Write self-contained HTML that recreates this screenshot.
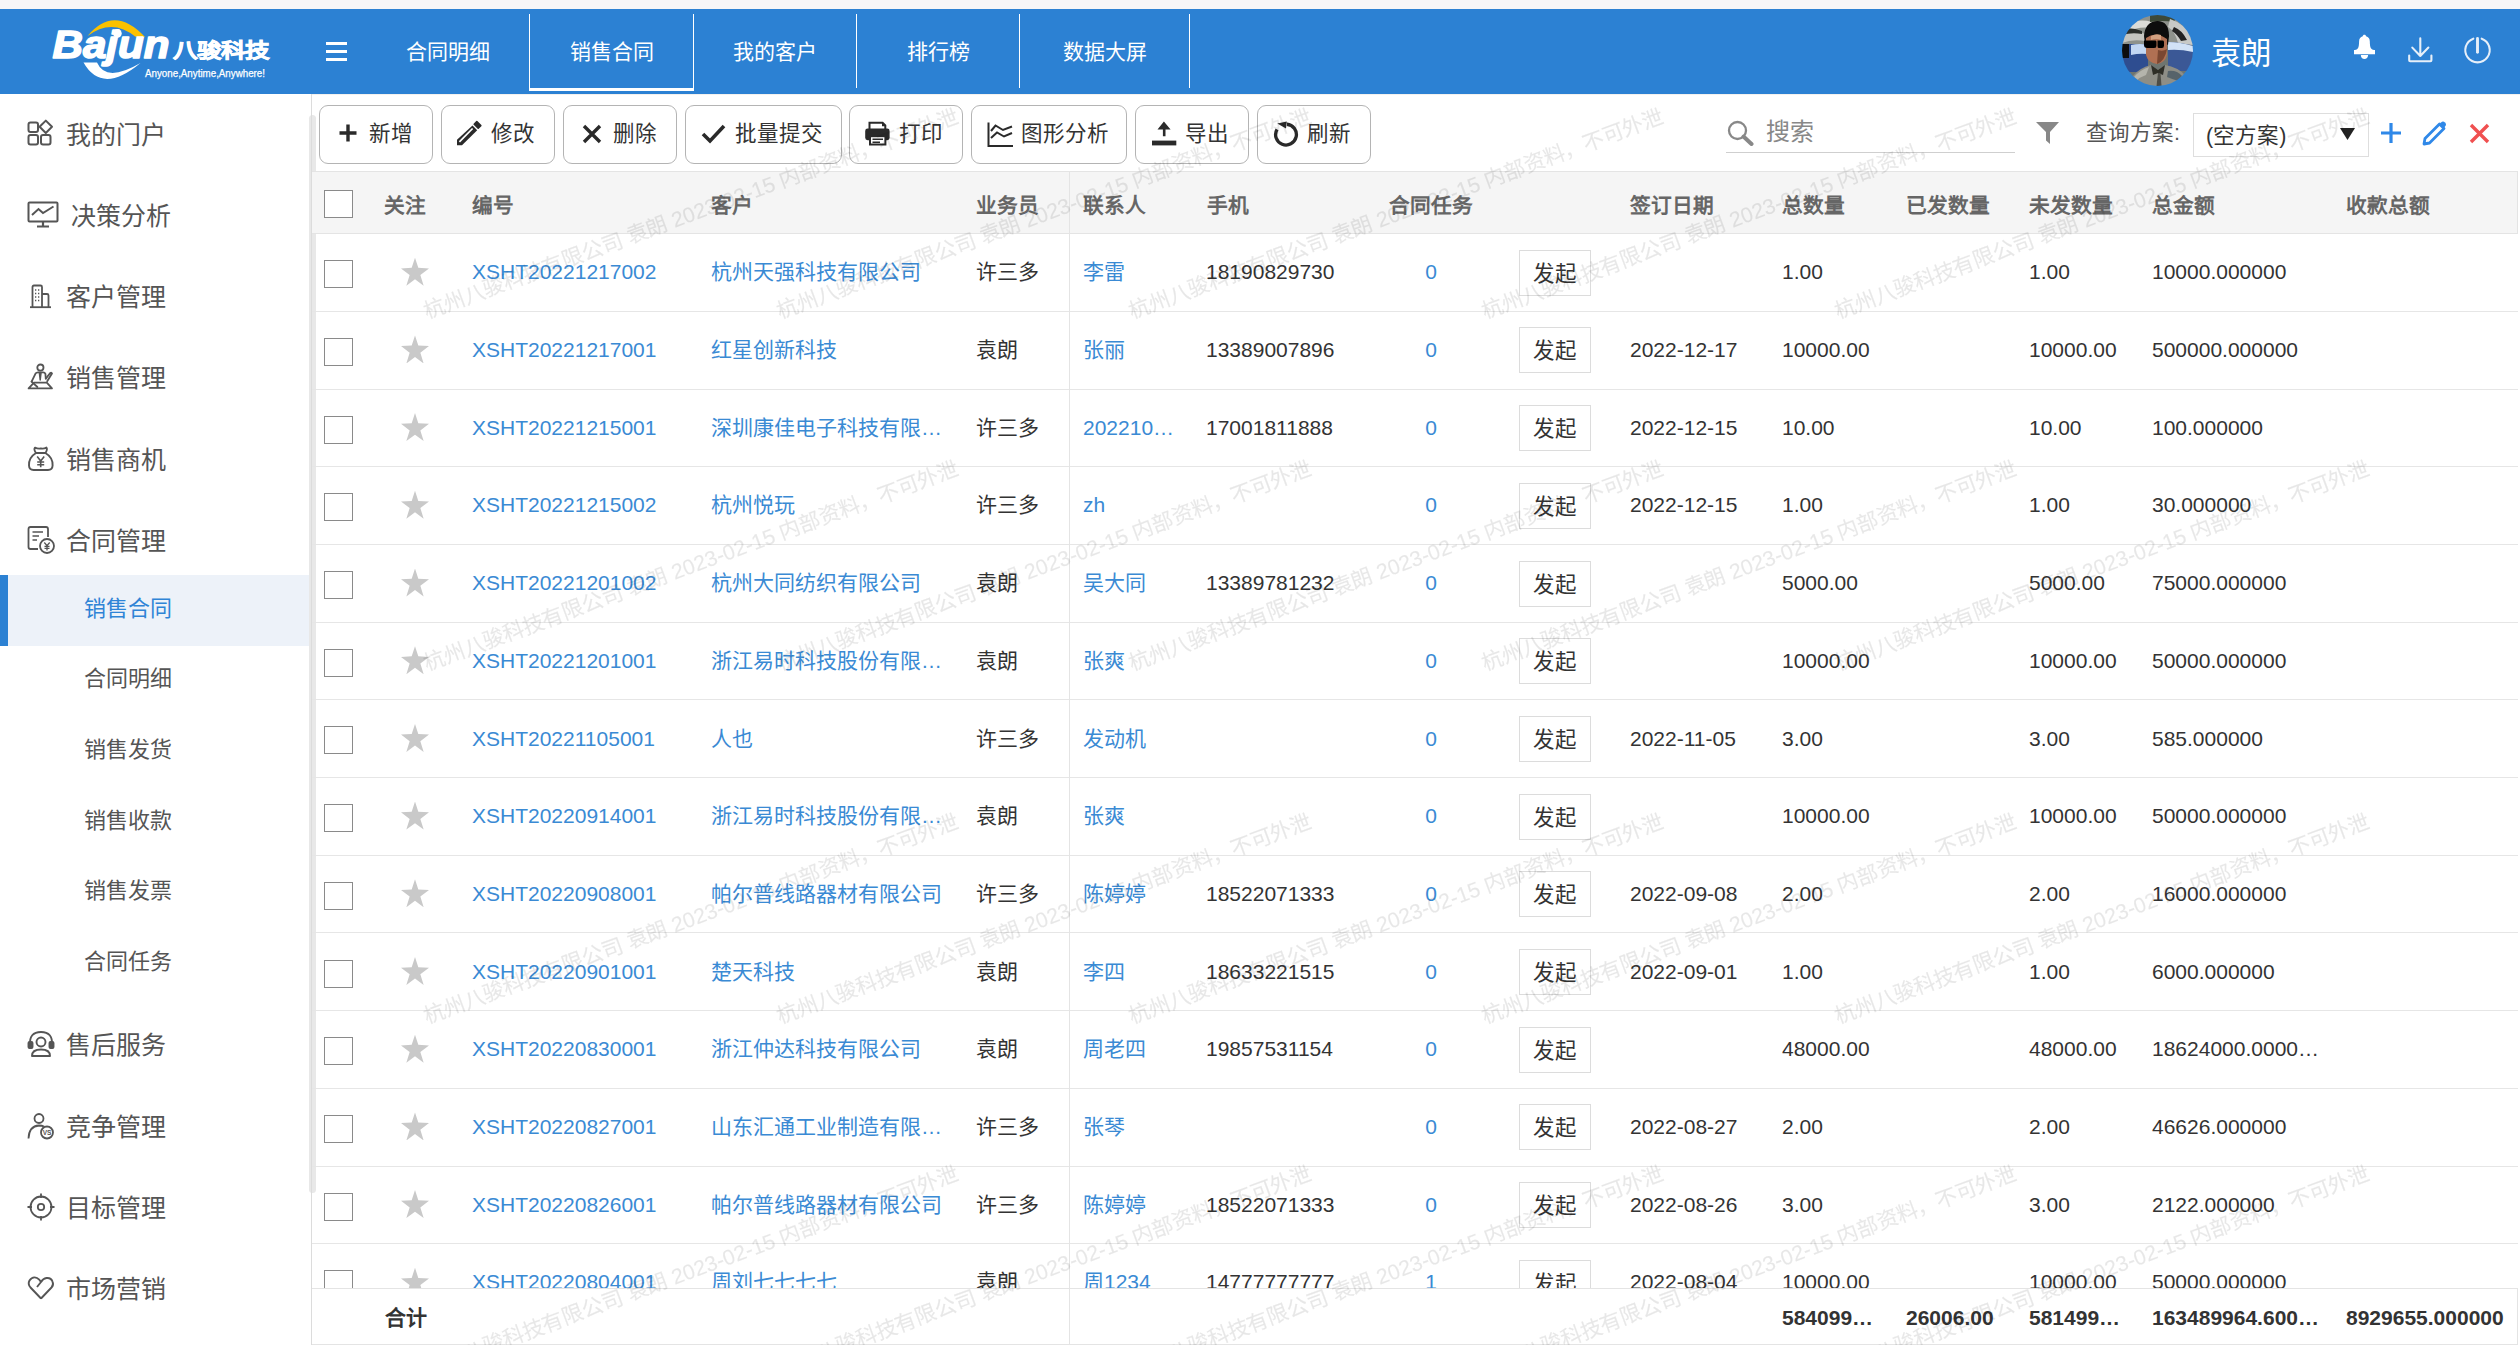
<!DOCTYPE html>
<html lang="zh-CN"><head><meta charset="utf-8"><title>销售合同</title>
<style>
*{margin:0;padding:0;box-sizing:border-box}
html,body{width:2520px;height:1345px;overflow:hidden;background:#fff;font-family:"Liberation Sans",sans-serif;color:#333}
#topstrip{position:absolute;left:0;top:0;width:2520px;height:9px;background:#f6f6f8}
#hdr{position:absolute;left:0;top:9px;width:2520px;height:85px;background:#2c81d3;box-shadow:0 1px 0 rgba(120,100,80,0.09)}
#logo{position:absolute;left:40px;top:10px;width:240px;height:80px}
#burger{position:absolute;left:326px;top:42px;width:21px;height:19px}
#burger i{position:absolute;left:0;width:21px;height:2.6px;background:#fff}
.tab{position:absolute;top:14px;height:74px;color:#fff;font-size:21px;line-height:76px;text-align:center}
.tab.sep{border-right:1.5px solid #fff}
.tab.act{top:14px;height:77px;border-left:1.5px solid #fff;border-right:1.5px solid #fff;border-bottom:3px solid #fff;line-height:76px}
#avatar{position:absolute;left:2122px;top:15px;width:71px;height:71px;border-radius:50%;overflow:hidden}
#uname{position:absolute;left:2211px;top:32.5px;font-size:30.5px;line-height:40px;color:#fff}
.hico{position:absolute}

/* sidebar */
#side{position:absolute;left:0;top:94px;width:312px;height:1251px;background:#fff}
.mi{position:absolute;left:66px;margin-top:1px;font-size:25px;line-height:30px;color:#555;white-space:nowrap}
.si{position:absolute;left:84px;margin-top:1.8px;font-size:22px;line-height:30px;color:#555;white-space:nowrap}
.mico{position:absolute;left:26px;width:30px;height:30px}
#selbg{position:absolute;left:0;top:575px;width:311px;height:71px;background:#edf2f9}
#selbar{position:absolute;left:0;top:575px;width:8px;height:71px;background:#2c81d3}
#sidel{position:absolute;left:311px;top:94px;width:1px;height:1251px;background:#dcdcdc}
#thumb{position:absolute;left:309px;top:115px;width:7px;height:1078px;background:#e8e8e8;border-radius:4px}

/* toolbar */
.btn{position:absolute;top:105px;height:59px;border:1.4px solid #b4b4b4;border-radius:9px;background:#fff;font-size:21.5px;line-height:56px;color:#333;white-space:nowrap}
.btn svg{position:absolute}
.btn span{position:absolute;top:0}
#search{position:absolute;left:1726px;top:112px;width:289px;height:41px;border-bottom:1.5px solid #cfcfcf}
#search span{position:absolute;left:40px;top:0;font-size:24px;line-height:40px;color:#888}
#qlabel{position:absolute;left:2086px;top:113px;font-size:21.5px;line-height:40px;color:#555}
#qsel{position:absolute;left:2193px;top:113px;width:176px;height:44px;border:1px solid #dedede;background:#fff}
#qsel span{position:absolute;left:12px;top:2px;font-size:21.5px;line-height:40px;color:#333}

/* table */
#thead{position:absolute;left:312px;top:171px;width:2206px;height:63px;background:#f5f5f5;border-top:1.5px solid #e4e4e4;border-bottom:1.5px solid #e4e4e4;border-right:1.5px solid #e4e4e4}
.th{position:absolute;top:4px;font-size:20.7px;line-height:60px;font-weight:bold;color:#666;white-space:nowrap}
#tbody{position:absolute;left:312px;top:0;width:2206px;height:1345px}
.row{position:absolute;left:0;width:2206px;height:77.7px;border-bottom:1.5px solid #e6e6e6}
.c{position:absolute;top:-0.9px;margin-left:-312px;font-size:21px;line-height:77px;color:#333;white-space:nowrap}
.lk{color:#3a8ad4}
.ctr{text-align:center}
.cb{position:absolute;left:12px;top:26px;width:29px;height:28px;border:1.6px solid #8a8a8a;background:#fff}
.star{position:absolute;left:89px;top:23.5px;width:28px;height:28px;background:#c9c9c9;clip-path:polygon(50% 0%,61.8% 36.2%,100% 38.2%,69.1% 61.8%,80.9% 100%,50% 77%,19.1% 100%,30.9% 61.8%,0% 38.2%,38.2% 36.2%)}
.fq{position:absolute;left:1207px;top:15.5px;width:72px;height:46px;border:1px solid #dcdcdc;background:#fff;font-weight:normal;font-size:21.5px;line-height:46px;text-align:center;color:#333}
#vdiv{position:absolute;left:1069px;top:171px;width:1px;height:1174px;background:#e4e4e4}
#tfoot{position:absolute;left:312px;top:1288px;width:2206px;height:57px;background:#fff;border-top:1.5px solid #e4e4e4;border-bottom:1.5px solid #e4e4e4;border-right:1.5px solid #e4e4e4}
.tf{position:absolute;top:1.5px;font-size:21px;line-height:54px;font-weight:bold;color:#333;white-space:nowrap}
#wm{position:absolute;left:312px;top:94px;width:2208px;height:1251px;overflow:hidden;pointer-events:none;opacity:0.09}
.wmt{position:absolute;font-size:21.3px;color:#000;-webkit-text-stroke:0.2px #000;white-space:nowrap;transform-origin:0 100%;transform:rotate(-20.3deg);line-height:24px}

</style></head><body>
<div id="topstrip"></div>
<div id="hdr"></div>
<svg id="logo" viewBox="0 0 240 80" width="240" height="80">
  <path d="M47.5 26 Q74 -6 105 27 L95.5 26.8 Q72 7.5 47.5 26 Z" fill="#fac100"/>
  <path d="M43.5 52.5 Q62 85 100.5 53 Q66 73 57 52.5 Z" fill="#fff"/>
  <text x="12.5" y="48.3" font-family="Liberation Sans" font-weight="bold" font-style="italic" font-size="39" fill="#fff" stroke="#fff" stroke-width="1.6" stroke-linejoin="round" textLength="117" lengthAdjust="spacingAndGlyphs">Bajun</text>
  <circle cx="77.4" cy="23.4" r="4.3" fill="#fff"/>
  <text x="132.5" y="47.6" font-weight="bold" font-size="20.5" fill="#fff" stroke="#fff" stroke-width="0.7" textLength="96" lengthAdjust="spacingAndGlyphs">八骏科技</text>
  <text x="105" y="67" font-family="Liberation Sans" font-size="11" fill="#fff" stroke="#fff" stroke-width="0.25" textLength="120" lengthAdjust="spacingAndGlyphs">Anyone,Anytime,Anywhere!</text>
</svg>
<div id="burger"><i style="top:0"></i><i style="top:8.2px"></i><i style="top:16.4px"></i></div>
<div class="tab" style="left:366px;width:163px">合同明细</div>
<div class="tab act" style="left:529px;width:165px">销售合同</div>
<div class="tab sep" style="left:694px;width:163px">我的客户</div>
<div class="tab sep" style="left:857px;width:163px">排行榜</div>
<div class="tab sep" style="left:1020px;width:170px">数据大屏</div>
<div id="avatar">
  <svg viewBox="0 0 71 71" width="71" height="71">
    <defs><filter id="avb" x="-5%" y="-5%" width="110%" height="110%"><feGaussianBlur stdDeviation="0.55"/></filter></defs>
    <g filter="url(#avb)">
    <rect width="71" height="71" fill="#6e7470"/>
    <path d="M0 0 H71 V30 H0 Z" fill="#8e928c"/>
    <path d="M4 10 Q16 3 30 7 L29 13 Q16 11 4 18 Z" fill="#dcdcd8"/>
    <path d="M0 20 Q12 15 24 19 L23 26 Q10 24 0 28 Z" fill="#c4c5c0"/>
    <path d="M0 14 Q10 12 20 16 L20 19 Q10 17 0 20 Z" fill="#2a2e2a"/>
    <path d="M28 0 Q40 -2 54 2 L52 7 Q40 5 28 7 Z" fill="#3e4a38"/>
    <path d="M48 4 Q64 9 71 24 V30 L56 28 Q53 16 46 12 Z" fill="#c8c9c6"/>
    <path d="M52 12 Q60 15 65 25 L59 26 Q55 19 50 16 Z" fill="#222"/>
    <path d="M0 29 H26 V57 H0 Z" fill="#2f4e90"/>
    <path d="M9 30 Q18 28 26 30 V39 Q17 38 9 40 Z" fill="#c2d7f3"/>
    <path d="M0 29 H7 V43 H0 Z" fill="#0a0a0a"/>
    <path d="M46 27 Q58 27 71 31 V56 H46 Z" fill="#3a5896"/>
    <path d="M46 27 Q58 27 71 31 V37 Q58 34 46 35 Z" fill="#d2e2f6"/>
    <path d="M22 21 Q23 7 35 6 Q47 6 47 21 L46 30 Q35 23 23 29 Z" fill="#0a0a0a"/>
    <path d="M24 23 Q34 16 45 24 L45 40 Q43 48 35 49 Q26 48 24 40 Z" fill="#b07052"/>
    <path d="M29 21 Q34 18 39 20 L39 25 Q34 23 29 25 Z" fill="#d2a080"/>
    <path d="M36 35 Q41 37 45 34 Q43 46 35 49 Z" fill="#7a4630"/>
    <path d="M22 25.5 H33.5 Q34.5 25.5 34.5 27 V30.5 Q34.5 33 32.5 33 H25 Q22 33 22 30 Z" fill="#050505"/>
    <path d="M35.5 25.5 H41 Q42 25.5 42 27 V30.5 Q42 33 40 33 H36.5 Q35.5 33 35.5 31 Z" fill="#050505"/>
    <path d="M8 71 L11 61 Q17 53 29 50 L36 55 L43 50 Q56 52 64 61 L67 71 Z" fill="#8e8e86"/>
    <path d="M12 62 Q18 55 27 52 L24 60 Q18 62 14 66 Z" fill="#b4b4ac"/>
    <path d="M29 50 L36 55 L43 50 L41 60 L36 58 L31 60 Z" fill="#2e2e28"/>
    <path d="M46 56 Q55 55 60 61 L56 66 Q50 64 45 62 Z" fill="#56646a"/>
    <path d="M36 58 L34.5 71 H39.5 L38.5 58 Z" fill="#4e4e46"/>
    </g>
  </svg>
</div>
<div id="uname">袁朗</div>
<svg class="hico" style="left:2353px;top:34px" width="23" height="26" viewBox="0 0 23 26">
  <path d="M11.4 0.8 C10.3 0.8 9.9 1.5 9.7 2.3 C7.5 2.9 6.2 4.6 6.1 7.2 C6 11 5.9 13.4 4.3 15 C3.5 15.8 2.4 16.1 1 16.1 V20.2 H22 V16.1 C20.6 16.1 19.4 15.8 18.6 15 C17 13.4 16.9 11 16.8 7.2 C16.7 4.6 15.4 2.9 13.1 2.3 C12.9 1.5 12.5 0.8 11.4 0.8 Z" fill="#fff"/>
  <path d="M7.8 20.9 H15.1 C15 23.3 13.5 24.9 11.45 24.9 C9.4 24.9 7.9 23.3 7.8 20.9 Z" fill="#fff"/>
</svg>
<svg class="hico" style="left:2406px;top:36px" width="28" height="28" viewBox="0 0 28 28" fill="none" stroke="#e6eff9" stroke-width="2.1" stroke-linecap="round" stroke-linejoin="round">
  <path d="M14.3 2.4 V20 M6.3 11.6 L14.3 20 L22.4 11.6"/>
  <path d="M3.2 19.6 V24.3 Q3.2 25.3 4.2 25.3 H24.4 Q25.4 25.3 25.4 24.3 V19.6"/>
</svg>
<svg class="hico" style="left:2462px;top:35px" width="32" height="32" viewBox="0 0 32 32" fill="none" stroke="#e6eff9" stroke-width="2.1" stroke-linecap="round">
  <path d="M11.3 3.7 A12.2 12.2 0 1 0 19.7 3.7"/>
  <path d="M15.5 3.4 V17.3" stroke-width="2.9"/>
</svg>

<!-- sidebar -->
<div id="side">
</div>
<div id="selbg"></div><div id="selbar"></div>
<div id="thumb"></div>
<div id="sidel"></div>

<!-- main items -->
<svg class="mico" style="top:119px" viewBox="0 0 30 30" fill="none" stroke="#555" stroke-width="2">
  <rect x="2.5" y="3.5" width="9.5" height="9.5" rx="2"/>
  <rect x="2.5" y="16" width="9.5" height="9.5" rx="2"/>
  <rect x="15" y="16" width="9.5" height="9.5" rx="2"/>
  <path d="M19.8 1.6 L26 7.8 L19.8 14 L13.6 7.8 Z" stroke-linejoin="round"/>
</svg>
<div class="mi" style="top:119px">我的门户</div>
<svg class="mico" style="top:200px;width:34px" viewBox="0 0 34 30" fill="none" stroke="#555" stroke-width="2">
  <rect x="2.5" y="2.5" width="29" height="19" rx="1"/>
  <path d="M6 15 L12.5 9 L17 13 L27.5 6.5"/>
  <path d="M17 21.5 V26 M11 26.5 H23" stroke-width="2.2"/>
</svg>
<div class="mi" style="top:200px;left:71px">决策分析</div>
<svg class="mico" style="top:281px" viewBox="0 0 30 30" fill="none" stroke="#555" stroke-width="1.8">
  <path d="M6.5 26 V6 Q6.5 4.5 8 4.5 H14.5 Q16 4.5 16 6 V26"/>
  <path d="M16 13 H21 Q22.5 13 22.5 14.5 V26"/>
  <path d="M4 26.2 H25"/>
  <path d="M9 9 H10.3 M12 9 H13.3 M9 12.5 H10.3 M12 12.5 H13.3 M9 16 H10.3 M12 16 H13.3 M9 19.5 H10.3 M12 19.5 H13.3" stroke-width="1.5"/>
</svg>
<div class="mi" style="top:281px">客户管理</div>
<svg class="mico" style="top:362px" viewBox="0 0 30 30" fill="none" stroke="#555" stroke-width="1.8" stroke-linejoin="round" stroke-linecap="round">
  <circle cx="14.4" cy="5.6" r="3.1"/>
  <path d="M5.6 19.6 L9.5 11.6 Q10.3 10.4 12 10.4 H17.2 Q18.8 10.4 19.4 11.8 L19.8 16.6"/>
  <path d="M13.4 10.9 L14.2 18 L15 10.9" stroke-width="1.5"/>
  <path d="M19.8 16.6 L24.2 11 Q25.6 10.2 26 11.6 L21.2 19.2"/>
  <path d="M5.6 19.6 L11.4 25"/>
  <path d="M8 20.6 H20.8 L26 26.4 H2.6 Z"/>
</svg>
<div class="mi" style="top:362px">销售管理</div>
<svg class="mico" style="top:444px" viewBox="0 0 30 30" fill="none" stroke="#555" stroke-width="1.9" stroke-linejoin="round">
  <path d="M10 9 Q7.5 5.5 9 3.6 Q12 5 14.8 4.4 Q17.6 5 20.4 3.6 Q21.8 5.5 19.4 9"/>
  <path d="M10 9 H19.4 Q27 13.5 26.6 21.5 Q26.4 26 22 26 H7.6 Q3.2 26 3 21.5 Q2.6 13.5 10 9 Z"/>
  <path d="M11.2 12.6 L14.7 17 L18.2 12.6 M14.7 17 V23.2 M11.2 18 H18.2 M11.2 20.8 H18.2" stroke-width="1.6"/>
</svg>
<div class="mi" style="top:444px">销售商机</div>
<svg class="mico" style="top:525px" viewBox="0 0 30 30" fill="none" stroke="#555" stroke-width="1.8" stroke-linejoin="round">
  <path d="M22 12 V4 Q22 2 20 2 H4.5 Q2.5 2 2.5 4 V22 Q2.5 24 4.5 24 H12"/>
  <path d="M6.5 7 H17 M6.5 11 H13 M6.5 15 H11" stroke-width="1.6"/>
  <circle cx="21" cy="21" r="7"/>
  <path d="M18.3 17.5 L21 20.6 L23.7 17.5 M21 20.6 V25.5 M18.5 21.3 H23.5 M18.5 23.3 H23.5" stroke-width="1.3"/>
</svg>
<div class="mi" style="top:525px">合同管理</div>
<div class="si" style="top:592px;color:#2f84d6">销售合同</div>
<div class="si" style="top:662px">合同明细</div>
<div class="si" style="top:733px">销售发货</div>
<div class="si" style="top:804px">销售收款</div>
<div class="si" style="top:874px">销售发票</div>
<div class="si" style="top:945px">合同任务</div>
<svg class="mico" style="top:1029px" viewBox="0 0 30 30" fill="none" stroke="#555" stroke-width="1.9" stroke-linejoin="round">
  <path d="M4 16 Q3 3 15 3 Q27 3 26 16"/>
  <rect x="2.5" y="13" width="4" height="6" rx="1" fill="#555"/>
  <rect x="23.5" y="13" width="4" height="6" rx="1" fill="#555"/>
  <circle cx="15" cy="13" r="4.5"/>
  <path d="M6 27 Q6 20.5 15 20.5 Q24 20.5 24 27 Z"/>
</svg>
<div class="mi" style="top:1029px">售后服务</div>
<svg class="mico" style="top:1111px" viewBox="0 0 30 30" fill="none" stroke="#555" stroke-width="1.8" stroke-linejoin="round">
  <circle cx="13" cy="7.5" r="4.5"/>
  <path d="M2.5 27.5 Q3 15 13 14.5 Q16 14.5 18 15.5"/>
  <circle cx="21" cy="21.5" r="6"/>
  <text x="21" y="24" font-size="6.5" font-weight="bold" fill="#555" stroke="none" text-anchor="middle" font-family="Liberation Sans">VS</text>
</svg>
<div class="mi" style="top:1111px">竞争管理</div>
<svg class="mico" style="top:1192px" viewBox="0 0 30 30" fill="none" stroke="#555" stroke-width="1.8">
  <circle cx="15" cy="15" r="10.5"/>
  <circle cx="15" cy="15" r="3.2"/>
  <path d="M15 1.5 V6 M15 24 V28.5 M1.5 15 H6 M24 15 H28.5"/>
</svg>
<div class="mi" style="top:1192px">目标管理</div>
<svg class="mico" style="top:1273px" viewBox="0 0 30 30" fill="none" stroke="#555" stroke-width="1.9" stroke-linejoin="round">
  <path d="M15 25.5 L4.5 14.5 Q1.5 11 3.5 7.5 Q6.5 3 11 5 Q13.5 6.3 15 9 L11 14 M15 9 Q17 5.5 20.5 5 Q25 4.5 26.5 8.5 Q28 12 25.5 14.5 L15 25.5"/>
</svg>
<div class="mi" style="top:1273px">市场营销</div>

<!-- toolbar -->
<div class="btn" style="left:319px;width:114px">
  <svg style="left:18px;top:17px" width="20" height="20" viewBox="0 0 20 20"><path d="M10 1.5 V18.5 M1.5 10 H18.5" stroke="#2a2a2a" stroke-width="3.4"/></svg>
  <span style="left:49px">新增</span>
</div>
<div class="btn" style="left:441px;width:114px">
  <svg style="left:15px;top:14px" width="28" height="28" viewBox="0 0 28 28">
    <path d="M-0.3 25.3 V20.1 L15.5 5.6 L20.2 10.3 L5 25.3 Z" fill="#2a2a2a"/>
    <path d="M2.4 21.9 L15.6 8.5" stroke="#fff" stroke-width="1.7"/>
    <path d="M17.2 4.2 L19.8 1.6 L23.8 5.6 L21.2 8.2 Z" fill="#2a2a2a" stroke="#2a2a2a" stroke-width="1.6" stroke-linejoin="round"/>
  </svg>
  <span style="left:49px">修改</span>
</div>
<div class="btn" style="left:563px;width:114px">
  <svg style="left:17px;top:17px" width="22" height="22" viewBox="0 0 22 22"><path d="M3 3 L19 19 M19 3 L3 19" stroke="#2a2a2a" stroke-width="3.4"/></svg>
  <span style="left:49px">删除</span>
</div>
<div class="btn" style="left:685px;width:157px">
  <svg style="left:15px;top:17px" width="26" height="22" viewBox="0 0 26 22"><path d="M2 11 L9 18 L23 3" fill="none" stroke="#2a2a2a" stroke-width="3.6"/></svg>
  <span style="left:49px">批量提交</span>
</div>
<div class="btn" style="left:849px;width:114px">
  <svg style="left:15px;top:14px" width="28" height="28" viewBox="0 0 28 28">
    <path d="M4.5 9 V2.8 H17.6 L20.3 5.5 V9" fill="none" stroke="#2a2a2a" stroke-width="2"/>
    <path d="M17 2 L21.2 6.2 H17 Z" fill="#2a2a2a"/>
    <path d="M2.6 8.5 H22.2 Q24.6 8.5 24.6 10.9 V17.8 Q24.6 20.2 22.2 20.2 H2.6 Q0.2 20.2 0.2 17.8 V10.9 Q0.2 8.5 2.6 8.5 Z" fill="#2a2a2a"/>
    <rect x="5" y="16.2" width="15.4" height="8.3" fill="#fff" stroke="#2a2a2a" stroke-width="2"/>
    <path d="M7.5 19.3 H18 M7.5 22.2 H15" stroke="#2a2a2a" stroke-width="1.5"/>
  </svg>
  <span style="left:49px">打印</span>
</div>
<div class="btn" style="left:971px;width:156px">
  <svg style="left:14px;top:15px" width="28" height="28" viewBox="0 0 28 28" fill="none" stroke="#2a2a2a" stroke-width="2">
    <path d="M2.5 1.5 V25 H27"/>
    <path d="M5 10 L9.5 4.5 L17 9 L26 5.5"/>
    <path d="M5 17 L11 11.5 L18 15.5 L26 12"/>
  </svg>
  <span style="left:49px">图形分析</span>
</div>
<div class="btn" style="left:1135px;width:114px">
  <svg style="left:16px;top:14px" width="26" height="28" viewBox="0 0 26 28">
    <path d="M11.9 1.6 L18.6 9.6 H13.5 V16.3 H10.9 V9.6 H5.5 Z" fill="#2a2a2a"/>
    <rect x="-0.3" y="20.6" width="24.6" height="4.8" fill="#2a2a2a"/>
  </svg>
  <span style="left:49px">导出</span>
</div>
<div class="btn" style="left:1257px;width:114px">
  <svg style="left:15px;top:15px" width="28" height="28" viewBox="0 0 28 28">
    <path d="M4.0 8.4 A10.4 10.4 0 1 0 13.9 3.24" fill="none" stroke="#2a2a2a" stroke-width="3.3"/>
    <path d="M4.3 2.6 L13.8 0.6 L13 7.6 Z" fill="#2a2a2a"/>
  </svg>
  <span style="left:49px">刷新</span>
</div>

<div id="search">
  <svg style="position:absolute;left:1px;top:8px" width="27" height="26" viewBox="0 0 27 26"><circle cx="10.5" cy="10.5" r="8.5" fill="none" stroke="#888" stroke-width="2.3"/><path d="M16.5 16.5 L24.5 24" stroke="#888" stroke-width="4" stroke-linecap="round"/></svg>
  <span>搜索</span>
</div>
<svg style="position:absolute;left:2035px;top:121px" width="25" height="24" viewBox="0 0 25 24"><path d="M1 1 H24 L15 11 V23 L11 19.5 V11 Z" fill="#888"/></svg>
<div id="qlabel">查询方案:</div>
<div id="qsel"><span>(空方案)</span>
  <svg style="position:absolute;left:145px;top:13px" width="17" height="14" viewBox="0 0 17 14"><path d="M1 1 H16 L8.5 13 Z" fill="#222"/></svg>
</div>
<svg style="position:absolute;left:2380px;top:122px" width="22" height="22" viewBox="0 0 22 22"><path d="M11 1 V21 M1 11 H21" stroke="#2f88e8" stroke-width="3.2"/></svg>
<svg style="position:absolute;left:2421px;top:119px" width="28" height="28" viewBox="0 0 28 28"><path d="M3 25 L4 19.5 L18.5 5 L23 9.5 L8.5 24 Z" fill="none" stroke="#2f88e8" stroke-width="2.8" stroke-linejoin="round"/><path d="M20 3.5 Q22 1.5 24 3.5 Q26 5.5 24 7.5 L22.5 9 L18.5 5 Z" fill="#2f88e8"/></svg>
<svg style="position:absolute;left:2469px;top:123px" width="21" height="21" viewBox="0 0 21 21"><path d="M2 2 L19 19 M19 2 L2 19" stroke="#f05050" stroke-width="3.4"/></svg>

<!-- table -->
<div id="tbody">
<div class="row" style="top:234.20px"><i class="cb"></i><i class="star"></i><span class="c lk" style="left:472px">XSHT20221217002</span><span class="c lk" style="left:711px">杭州天强科技有限公司</span><span class="c" style="left:976px">许三多</span><span class="c lk" style="left:1083px">李雷</span><span class="c" style="left:1206px">18190829730</span><span class="c lk ctr" style="left:1376px;width:110px">0</span><b class="fq">发起</b><span class="c" style="left:1782px">1.00</span><span class="c" style="left:2029px">1.00</span><span class="c" style="left:2152px">10000.000000</span></div>
<div class="row" style="top:311.90px"><i class="cb"></i><i class="star"></i><span class="c lk" style="left:472px">XSHT20221217001</span><span class="c lk" style="left:711px">红星创新科技</span><span class="c" style="left:976px">袁朗</span><span class="c lk" style="left:1083px">张丽</span><span class="c" style="left:1206px">13389007896</span><span class="c lk ctr" style="left:1376px;width:110px">0</span><b class="fq">发起</b><span class="c" style="left:1630px">2022-12-17</span><span class="c" style="left:1782px">10000.00</span><span class="c" style="left:2029px">10000.00</span><span class="c" style="left:2152px">500000.000000</span></div>
<div class="row" style="top:389.60px"><i class="cb"></i><i class="star"></i><span class="c lk" style="left:472px">XSHT20221215001</span><span class="c lk" style="left:711px">深圳康佳电子科技有限…</span><span class="c" style="left:976px">许三多</span><span class="c lk" style="left:1083px">202210…</span><span class="c" style="left:1206px">17001811888</span><span class="c lk ctr" style="left:1376px;width:110px">0</span><b class="fq">发起</b><span class="c" style="left:1630px">2022-12-15</span><span class="c" style="left:1782px">10.00</span><span class="c" style="left:2029px">10.00</span><span class="c" style="left:2152px">100.000000</span></div>
<div class="row" style="top:467.30px"><i class="cb"></i><i class="star"></i><span class="c lk" style="left:472px">XSHT20221215002</span><span class="c lk" style="left:711px">杭州悦玩</span><span class="c" style="left:976px">许三多</span><span class="c lk" style="left:1083px">zh</span><span class="c lk ctr" style="left:1376px;width:110px">0</span><b class="fq">发起</b><span class="c" style="left:1630px">2022-12-15</span><span class="c" style="left:1782px">1.00</span><span class="c" style="left:2029px">1.00</span><span class="c" style="left:2152px">30.000000</span></div>
<div class="row" style="top:545.00px"><i class="cb"></i><i class="star"></i><span class="c lk" style="left:472px">XSHT20221201002</span><span class="c lk" style="left:711px">杭州大同纺织有限公司</span><span class="c" style="left:976px">袁朗</span><span class="c lk" style="left:1083px">吴大同</span><span class="c" style="left:1206px">13389781232</span><span class="c lk ctr" style="left:1376px;width:110px">0</span><b class="fq">发起</b><span class="c" style="left:1782px">5000.00</span><span class="c" style="left:2029px">5000.00</span><span class="c" style="left:2152px">75000.000000</span></div>
<div class="row" style="top:622.70px"><i class="cb"></i><i class="star"></i><span class="c lk" style="left:472px">XSHT20221201001</span><span class="c lk" style="left:711px">浙江易时科技股份有限…</span><span class="c" style="left:976px">袁朗</span><span class="c lk" style="left:1083px">张爽</span><span class="c lk ctr" style="left:1376px;width:110px">0</span><b class="fq">发起</b><span class="c" style="left:1782px">10000.00</span><span class="c" style="left:2029px">10000.00</span><span class="c" style="left:2152px">50000.000000</span></div>
<div class="row" style="top:700.40px"><i class="cb"></i><i class="star"></i><span class="c lk" style="left:472px">XSHT20221105001</span><span class="c lk" style="left:711px">人也</span><span class="c" style="left:976px">许三多</span><span class="c lk" style="left:1083px">发动机</span><span class="c lk ctr" style="left:1376px;width:110px">0</span><b class="fq">发起</b><span class="c" style="left:1630px">2022-11-05</span><span class="c" style="left:1782px">3.00</span><span class="c" style="left:2029px">3.00</span><span class="c" style="left:2152px">585.000000</span></div>
<div class="row" style="top:778.10px"><i class="cb"></i><i class="star"></i><span class="c lk" style="left:472px">XSHT20220914001</span><span class="c lk" style="left:711px">浙江易时科技股份有限…</span><span class="c" style="left:976px">袁朗</span><span class="c lk" style="left:1083px">张爽</span><span class="c lk ctr" style="left:1376px;width:110px">0</span><b class="fq">发起</b><span class="c" style="left:1782px">10000.00</span><span class="c" style="left:2029px">10000.00</span><span class="c" style="left:2152px">50000.000000</span></div>
<div class="row" style="top:855.80px"><i class="cb"></i><i class="star"></i><span class="c lk" style="left:472px">XSHT20220908001</span><span class="c lk" style="left:711px">帕尔普线路器材有限公司</span><span class="c" style="left:976px">许三多</span><span class="c lk" style="left:1083px">陈婷婷</span><span class="c" style="left:1206px">18522071333</span><span class="c lk ctr" style="left:1376px;width:110px">0</span><b class="fq">发起</b><span class="c" style="left:1630px">2022-09-08</span><span class="c" style="left:1782px">2.00</span><span class="c" style="left:2029px">2.00</span><span class="c" style="left:2152px">16000.000000</span></div>
<div class="row" style="top:933.50px"><i class="cb"></i><i class="star"></i><span class="c lk" style="left:472px">XSHT20220901001</span><span class="c lk" style="left:711px">楚天科技</span><span class="c" style="left:976px">袁朗</span><span class="c lk" style="left:1083px">李四</span><span class="c" style="left:1206px">18633221515</span><span class="c lk ctr" style="left:1376px;width:110px">0</span><b class="fq">发起</b><span class="c" style="left:1630px">2022-09-01</span><span class="c" style="left:1782px">1.00</span><span class="c" style="left:2029px">1.00</span><span class="c" style="left:2152px">6000.000000</span></div>
<div class="row" style="top:1011.20px"><i class="cb"></i><i class="star"></i><span class="c lk" style="left:472px">XSHT20220830001</span><span class="c lk" style="left:711px">浙江仲达科技有限公司</span><span class="c" style="left:976px">袁朗</span><span class="c lk" style="left:1083px">周老四</span><span class="c" style="left:1206px">19857531154</span><span class="c lk ctr" style="left:1376px;width:110px">0</span><b class="fq">发起</b><span class="c" style="left:1782px">48000.00</span><span class="c" style="left:2029px">48000.00</span><span class="c" style="left:2152px">18624000.0000…</span></div>
<div class="row" style="top:1088.90px"><i class="cb"></i><i class="star"></i><span class="c lk" style="left:472px">XSHT20220827001</span><span class="c lk" style="left:711px">山东汇通工业制造有限…</span><span class="c" style="left:976px">许三多</span><span class="c lk" style="left:1083px">张琴</span><span class="c lk ctr" style="left:1376px;width:110px">0</span><b class="fq">发起</b><span class="c" style="left:1630px">2022-08-27</span><span class="c" style="left:1782px">2.00</span><span class="c" style="left:2029px">2.00</span><span class="c" style="left:2152px">46626.000000</span></div>
<div class="row" style="top:1166.60px"><i class="cb"></i><i class="star"></i><span class="c lk" style="left:472px">XSHT20220826001</span><span class="c lk" style="left:711px">帕尔普线路器材有限公司</span><span class="c" style="left:976px">许三多</span><span class="c lk" style="left:1083px">陈婷婷</span><span class="c" style="left:1206px">18522071333</span><span class="c lk ctr" style="left:1376px;width:110px">0</span><b class="fq">发起</b><span class="c" style="left:1630px">2022-08-26</span><span class="c" style="left:1782px">3.00</span><span class="c" style="left:2029px">3.00</span><span class="c" style="left:2152px">2122.000000</span></div>
<div class="row" style="top:1244.30px"><i class="cb"></i><i class="star"></i><span class="c lk" style="left:472px">XSHT20220804001</span><span class="c lk" style="left:711px">周刘七七七七</span><span class="c" style="left:976px">袁朗</span><span class="c lk" style="left:1083px">周1234</span><span class="c" style="left:1206px">14777777777</span><span class="c lk ctr" style="left:1376px;width:110px">1</span><b class="fq">发起</b><span class="c" style="left:1630px">2022-08-04</span><span class="c" style="left:1782px">10000.00</span><span class="c" style="left:2029px">10000.00</span><span class="c" style="left:2152px">50000.000000</span></div>

</div>
<div id="thead">
  <i class="cb" style="top:18px"></i>
  <span class="th" style="left:72px">关注</span>
  <span class="th" style="left:160px">编号</span>
  <span class="th" style="left:399px">客户</span>
  <span class="th" style="left:664px">业务员</span>
  <span class="th" style="left:771px">联系人</span>
  <span class="th" style="left:895px">手机</span>
  <span class="th" style="left:1064px;width:110px;text-align:center">合同任务</span>
  <span class="th" style="left:1318px">签订日期</span>
  <span class="th" style="left:1470px">总数量</span>
  <span class="th" style="left:1594px">已发数量</span>
  <span class="th" style="left:1717px">未发数量</span>
  <span class="th" style="left:1840px">总金额</span>
  <span class="th" style="left:2034px">收款总额</span>
</div>
<div id="tfoot">
  <span class="tf" style="left:73px">合计</span>
  <span class="tf" style="left:1470px">584099…</span>
  <span class="tf" style="left:1594px">26006.00</span>
  <span class="tf" style="left:1717px">581499…</span>
  <span class="tf" style="left:1840px">163489964.600…</span>
  <span class="tf" style="left:2034px">8929655.000000</span>
</div>
<div id="vdiv"></div>
<div id="wm"><div class="wmt" style="left:117.0px;top:205.5px">杭州八骏科技有限公司 袁朗 2023-02-15 内部资料，不可外泄</div><div class="wmt" style="left:469.7px;top:205.5px">杭州八骏科技有限公司 袁朗 2023-02-15 内部资料，不可外泄</div><div class="wmt" style="left:822.4px;top:205.5px">杭州八骏科技有限公司 袁朗 2023-02-15 内部资料，不可外泄</div><div class="wmt" style="left:1175.1px;top:205.5px">杭州八骏科技有限公司 袁朗 2023-02-15 内部资料，不可外泄</div><div class="wmt" style="left:1527.8px;top:205.5px">杭州八骏科技有限公司 袁朗 2023-02-15 内部资料，不可外泄</div><div class="wmt" style="left:117.0px;top:558.0px">杭州八骏科技有限公司 袁朗 2023-02-15 内部资料，不可外泄</div><div class="wmt" style="left:469.7px;top:558.0px">杭州八骏科技有限公司 袁朗 2023-02-15 内部资料，不可外泄</div><div class="wmt" style="left:822.4px;top:558.0px">杭州八骏科技有限公司 袁朗 2023-02-15 内部资料，不可外泄</div><div class="wmt" style="left:1175.1px;top:558.0px">杭州八骏科技有限公司 袁朗 2023-02-15 内部资料，不可外泄</div><div class="wmt" style="left:1527.8px;top:558.0px">杭州八骏科技有限公司 袁朗 2023-02-15 内部资料，不可外泄</div><div class="wmt" style="left:117.0px;top:910.5px">杭州八骏科技有限公司 袁朗 2023-02-15 内部资料，不可外泄</div><div class="wmt" style="left:469.7px;top:910.5px">杭州八骏科技有限公司 袁朗 2023-02-15 内部资料，不可外泄</div><div class="wmt" style="left:822.4px;top:910.5px">杭州八骏科技有限公司 袁朗 2023-02-15 内部资料，不可外泄</div><div class="wmt" style="left:1175.1px;top:910.5px">杭州八骏科技有限公司 袁朗 2023-02-15 内部资料，不可外泄</div><div class="wmt" style="left:1527.8px;top:910.5px">杭州八骏科技有限公司 袁朗 2023-02-15 内部资料，不可外泄</div><div class="wmt" style="left:117.0px;top:1263.0px">杭州八骏科技有限公司 袁朗 2023-02-15 内部资料，不可外泄</div><div class="wmt" style="left:469.7px;top:1263.0px">杭州八骏科技有限公司 袁朗 2023-02-15 内部资料，不可外泄</div><div class="wmt" style="left:822.4px;top:1263.0px">杭州八骏科技有限公司 袁朗 2023-02-15 内部资料，不可外泄</div><div class="wmt" style="left:1175.1px;top:1263.0px">杭州八骏科技有限公司 袁朗 2023-02-15 内部资料，不可外泄</div><div class="wmt" style="left:1527.8px;top:1263.0px">杭州八骏科技有限公司 袁朗 2023-02-15 内部资料，不可外泄</div></div>

</body></html>
